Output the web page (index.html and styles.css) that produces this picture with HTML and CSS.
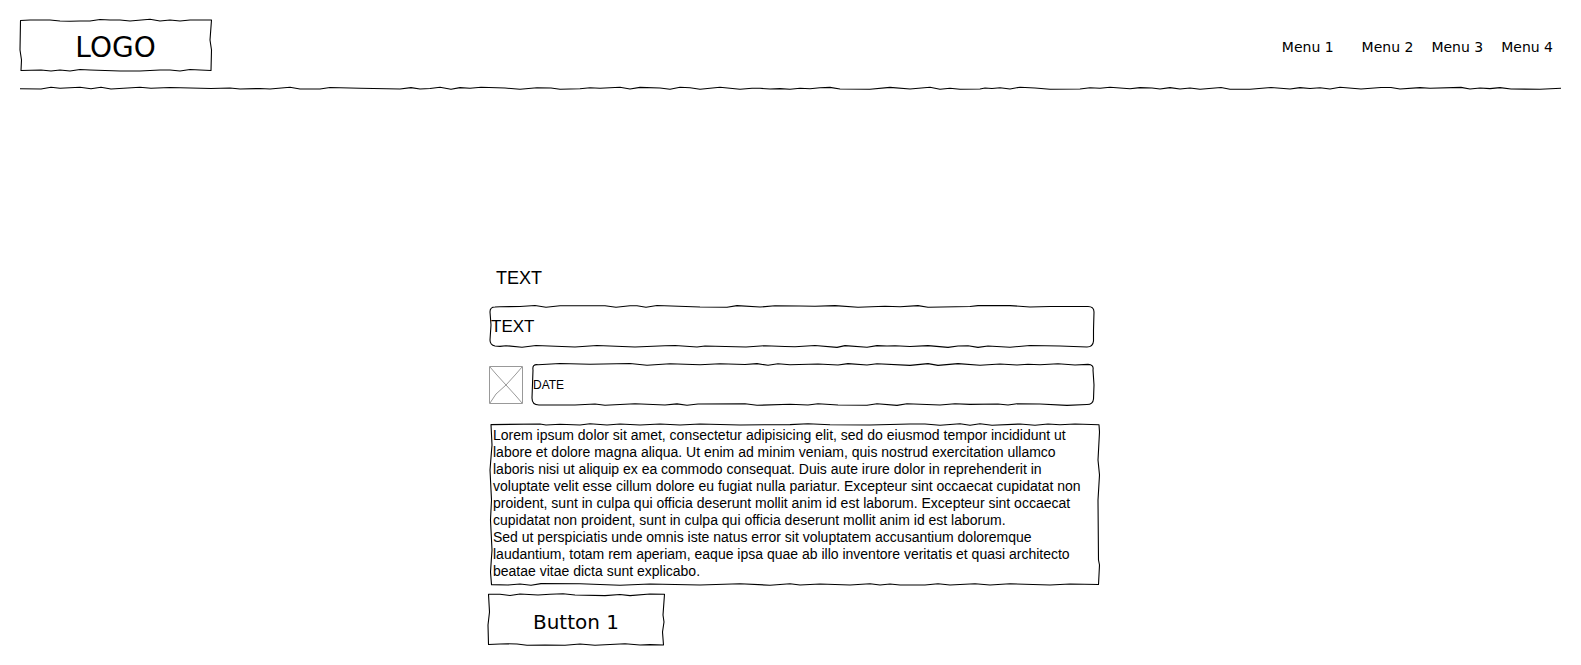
FILE: index.html
```html
<!DOCTYPE html>
<html lang="en">
<head>
<meta charset="utf-8">
<meta name="viewport" content="width=device-width, initial-scale=1">
<title>Wireframe</title>
<link rel="stylesheet" href="styles.css">
</head>
<body>
<header class="header">
  <div class="bar">
    <a class="logo sketch" href="#">
      <svg class="outline" viewBox="20 20 191 50" preserveAspectRatio="none" aria-hidden="true"><path d="M20.5 20.5L30 20 50 20 60 21 70 21.3 80 21 90 21 100 19.5 110 20 120 20 130 21 150 19.3 160 21 170 20 180 21 190 20 211.5 20 210 40 211.5 50 211 70.5 200 70 190 69.5 180 71 170 70 160 70 140 71 120 71 90 70 80 69.5 70 71 60 70 51 71 41 70 21 70.5 21.5 60 20 50Z"/></svg>
      <span>LOGO</span>
    </a>
    <nav>
      <ul class="menu">
        <li><a href="#">Menu 1</a></li>
        <li><a href="#">Menu 2</a></li>
        <li><a href="#">Menu 3</a></li>
        <li><a href="#">Menu 4</a></li>
      </ul>
    </nav>
  </div>
  <svg class="rule" viewBox="20 87 1541 3" preserveAspectRatio="none" aria-hidden="true"><path d="M20 88.7L41 89 51 87.3 60 88.3 80 87.3 91 88.7 101 87.3 111 89 140 87.3 151 88.3 170 87.5 211 88.5 230 88 240 89 260 88.5 270 89 290 87.3 300 89 320 89 330 87.5 360 88.3 400 89 411 87.6 420 89 430 88.5 440 87.3 451 89.3 460 87.6 470 88.3 481 87.2 505 88 520 89.3 537 87.8 551 88 560 89.3 580 88.7 590 87.8 600 88.3 620 87.3 630 89 640 87.4 660 88 670 89.3 680 87.3 690 87.7 700 89.3 720 87.3 740 89.3 752 88.3 760 88.3 770 89 780 88.6 790 89.2 800 88.3 810 88.8 820 87.8 830 87.4 840 89 870 89.2 890 87.4 910 89 930 87.3 940 89.2 950 88.2 960 89.2 980 89 985 88 992 88.5 1000 87.8 1010 89 1020 87.2 1035 88 1050 89.3 1080 89 1090 87.7 1100 88.3 1110 87.3 1130 88.7 1140 87.6 1152 88 1160 89 1170 87.6 1180 89 1190 88 1200 89.3 1221 87.5 1230 89.3 1250 89.3 1271 87.5 1290 89 1300 87.6 1310 88.5 1320 87.7 1330 89 1340 87.3 1361 89 1381 87.5 1391 87.5 1400 89 1420 87.6 1430 88.3 1461 87.4 1470 89 1480 88 1490 88.6 1500 87.6 1511 89 1540 89.3 1561 88.3"/></svg>
</header>

<main class="main">
  <form class="form">
    <label class="label" for="text">TEXT</label>
    <div class="field sketch">
      <svg class="outline" viewBox="490 306 604 40" preserveAspectRatio="none" aria-hidden="true"><path d="M495 307L500 306.7 520 306.5 535 305.5 546 307.3 560 305.7 605 305.7 616 307.3 630 305.7 637 305.8 646 307.3 657 305.5 700 307 727 307.2 737 305.6 760 307 775 305.8 800 306 815 306.2 835 305.6 858 307.2 885 306.3 900 306.8 918 305.6 928 307.2 970 306.5 978 305.6 1010 305.6 1030 307 1050 306.5 1088 306.5Q1094 306.5 1094 312L1093.5 330 1093.5 341Q1093 347 1087 347L1060 346 1030 345.5 1010 347.2 988 346 978 347.4 968 345.8 958 346 948 347.4 928 345.6 910 346.5 895 345.8 887 346 877 345.6 867 347.3 845 345.6 837 347.4 815 345.5 795 346.8 785 346.5 765 345.7 746 347 705 346 697 347 675 345.5 665 345.8 635 347 597 345.5 575 347 536 345.5 522 347.3 506 345.7 500 346.4 495 346Q490 345 490 340L491 325 490 312Q490 307 495 307Z"/></svg>
      <input class="input" id="text" type="text" value="TEXT">
    </div>
    <div class="date-row">
      <svg class="picture" width="35" height="39" viewBox="0 0 35 39" aria-hidden="true"><path d="M1.500 1.500H34.500V38.500H1.500ZM2 2L8 9 18 20 28 31 34 38M34 2L28 9 18 20 8 29 2 38"/></svg>
      <div class="field date sketch">
        <svg class="outline" viewBox="532 364 562 40" preserveAspectRatio="none" aria-hidden="true"><path d="M538 364.700L560 363.500 590 364.200 630 363.500 647 365.300 670 363.800 700 364.700 720 363.700 745 364.500 757 363.600 768 365.300 778 363.700 790 364.700 818 364 838 365 848 363.600 867 365 877 363.800 910 365.400 928 363.600 938 365.400 958 363.600 980 365.200 1000 364 1017 365 1028 364.200 1040 364.700 1058 363.800 1075 365 1088 364.400Q1094 364.500 1093 370L1094 385 1093.500 399Q1093 404.500 1087 404.500L1067 405.400 1040 404 1017 403.700 1008 405 998 404 970 404.400 955 403.800 940 405 907 403.700 897 405.400 877 403.700 867 405.200 838 405 818 403.800 808 405 790 404.300 757 405.300 745 403.700 698 404 687 405.300 677 403.900 665 405 635 403.800 605 405.300 595 404 575 405 539 405Q532 405 532 398L533 370Q532 364 538 364.700Z"/></svg>
        <input class="input small" type="text" value="DATE" aria-label="Date">
      </div>
    </div>
    <div class="note sketch">
      <svg class="outline" viewBox="491 425 608 160" preserveAspectRatio="none" aria-hidden="true"><path d="M491 424.600L540 424 546 425 560 424.200 580 425 590 423.800 607 425 620 424 640 425 660 424 680 425 700 424 740 425 790 424.600 808 423.700 830 424.800 870 425 910 424 925 424 940 425.200 960 423.800 970 425.200 980 423.800 992 425.200 1020 424 1035 425.200 1048 424 1060 424.800 1075 424 1099 424.800 1099.500 432 1098 460 1099.500 475 1098 500 1098.500 560 1099.500 565 1098.500 584.500 1070 584 1050 585 1010 583.800 990 585 975 583.800 950 585 938 583.800 925 585 900 585 890 584 880 585 870 583.700 850 585 820 584 800 585 790 583.800 770 585.200 740 583.800 700 585 650 584 620 585.300 580 583.800 541 583.600 531 585.200 520 584 508 585 491.500 584.600 490.500 572 492 550 490.500 520 491.500 500 490 470 492 445Z"/></svg>
      <textarea class="textarea" rows="9" aria-label="Description" spellcheck="false">Lorem ipsum dolor sit amet, consectetur adipisicing elit, sed do eiusmod tempor incididunt ut labore et dolore magna aliqua. Ut enim ad minim veniam, quis nostrud exercitation ullamco laboris nisi ut aliquip ex ea commodo consequat. Duis aute irure dolor in reprehenderit in voluptate velit esse cillum dolore eu fugiat nulla pariatur. Excepteur sint occaecat cupidatat non proident, sunt in culpa qui officia deserunt mollit anim id est laborum. Excepteur sint occaecat cupidatat non proident, sunt in culpa qui officia deserunt mollit anim id est laborum.
Sed ut perspiciatis unde omnis iste natus error sit voluptatem accusantium doloremque laudantium, totam rem aperiam, eaque ipsa quae ab illo inventore veritatis et quasi architecto beatae vitae dicta sunt explicabo.</textarea>
    </div>
    <button class="button sketch" type="button">
      <svg class="outline" viewBox="488 595 176 50" preserveAspectRatio="none" aria-hidden="true"><path d="M488.500 594.300L500 594.300 510 595.500 520 594 538 595 550 594.300 563 593.700 575 595 605 595.600 620 594.500 630 595.600 650 594 664.500 594.300 663 615 664 622 662.500 632 663.500 645 650 644.600 640 645 625 643.700 595 645.200 580 644 565 645.200 545 645 527 645.300 517 644 508 643.800 500 644 488.500 644.500 488 625 489.500 612Z"/></svg>
      <span>Button 1</span>
    </button>
  </form>
</main>
</body>
</html>
```
FILE: styles.css
```css
* {
  box-sizing: border-box;
}

body {
  margin: 0;
  background: #fff;
  color: #000;
  font-family: "Liberation Sans", Arial, sans-serif;
  font-size: 14px;
}

a {
  color: inherit;
  text-decoration: none;
}

.header {
  padding: 20px 20px 0;
}

.bar {
  display: flex;
  justify-content: space-between;
  align-items: center;
}

/* Hand-drawn outlines stretch behind the content of their box */
.sketch {
  position: relative;
}

.sketch > :not(.outline) {
  position: relative;
}

.outline {
  position: absolute;
  inset: 0;
  width: 100%;
  height: 100%;
  overflow: visible;
  pointer-events: none;
}

.outline path,
.rule path {
  fill: none;
  stroke: #000;
  stroke-width: 1.1;
  stroke-linejoin: round;
  vector-effect: non-scaling-stroke;
}

.logo {
  display: flex;
  align-items: center;
  justify-content: center;
  width: 191px;
  height: 50px;
  padding-top: 4px;
  font-family: "DejaVu Sans", Verdana, sans-serif;
  font-size: 28px;
}

.menu {
  display: flex;
  gap: 18px;
  margin: 0;
  padding: 4px 8px 0 0;
  list-style: none;
  font-family: "DejaVu Sans", Verdana, sans-serif;
}

.menu li:first-child {
  margin-right: 10px;
}

.rule {
  display: block;
  width: 100%;
  height: 3px;
  margin-top: 17px;
  overflow: visible;
}

.main {
  max-width: 619px;
  margin: 0 auto;
  padding: 176px 0 20px 7px;
}

.form {
  display: flex;
  flex-direction: column;
}

.label {
  padding: 0 8px;
  font-size: 18px;
  line-height: 24px;
}

.field {
  height: 40px;
  margin: 16px 6px 0 2px;
}

.input {
  display: block;
  width: 100%;
  height: 100%;
  padding: 2px 1px 0;
  border: 0;
  outline: 0;
  background: none;
  color: inherit;
  font-family: inherit;
  font-size: 17px;
}

.input.small {
  font-size: 12px;
}

.date-row {
  display: flex;
  align-items: center;
  gap: 9px;
  margin: 18px 6px 0 0;
}

.picture {
  flex: none;
}

.picture path {
  fill: none;
  stroke: #999;
}

.date {
  flex: 1;
  margin: 0;
}

.note {
  margin: 21px 1px 0 3px;
}

.textarea {
  display: block;
  width: 100%;
  height: 160px;
  padding: 2px;
  border: 0;
  outline: 0;
  resize: none;
  overflow: hidden;
  background: none;
  color: inherit;
  font-family: inherit;
  font-size: 14px;
  line-height: 17px;
}

.button {
  width: 176px;
  height: 50px;
  margin-top: 10px;
  padding: 4px 0 0;
  border: 0;
  background: none;
  color: inherit;
  font-family: "DejaVu Sans", Verdana, sans-serif;
  font-size: 20px;
  cursor: pointer;
}
```
